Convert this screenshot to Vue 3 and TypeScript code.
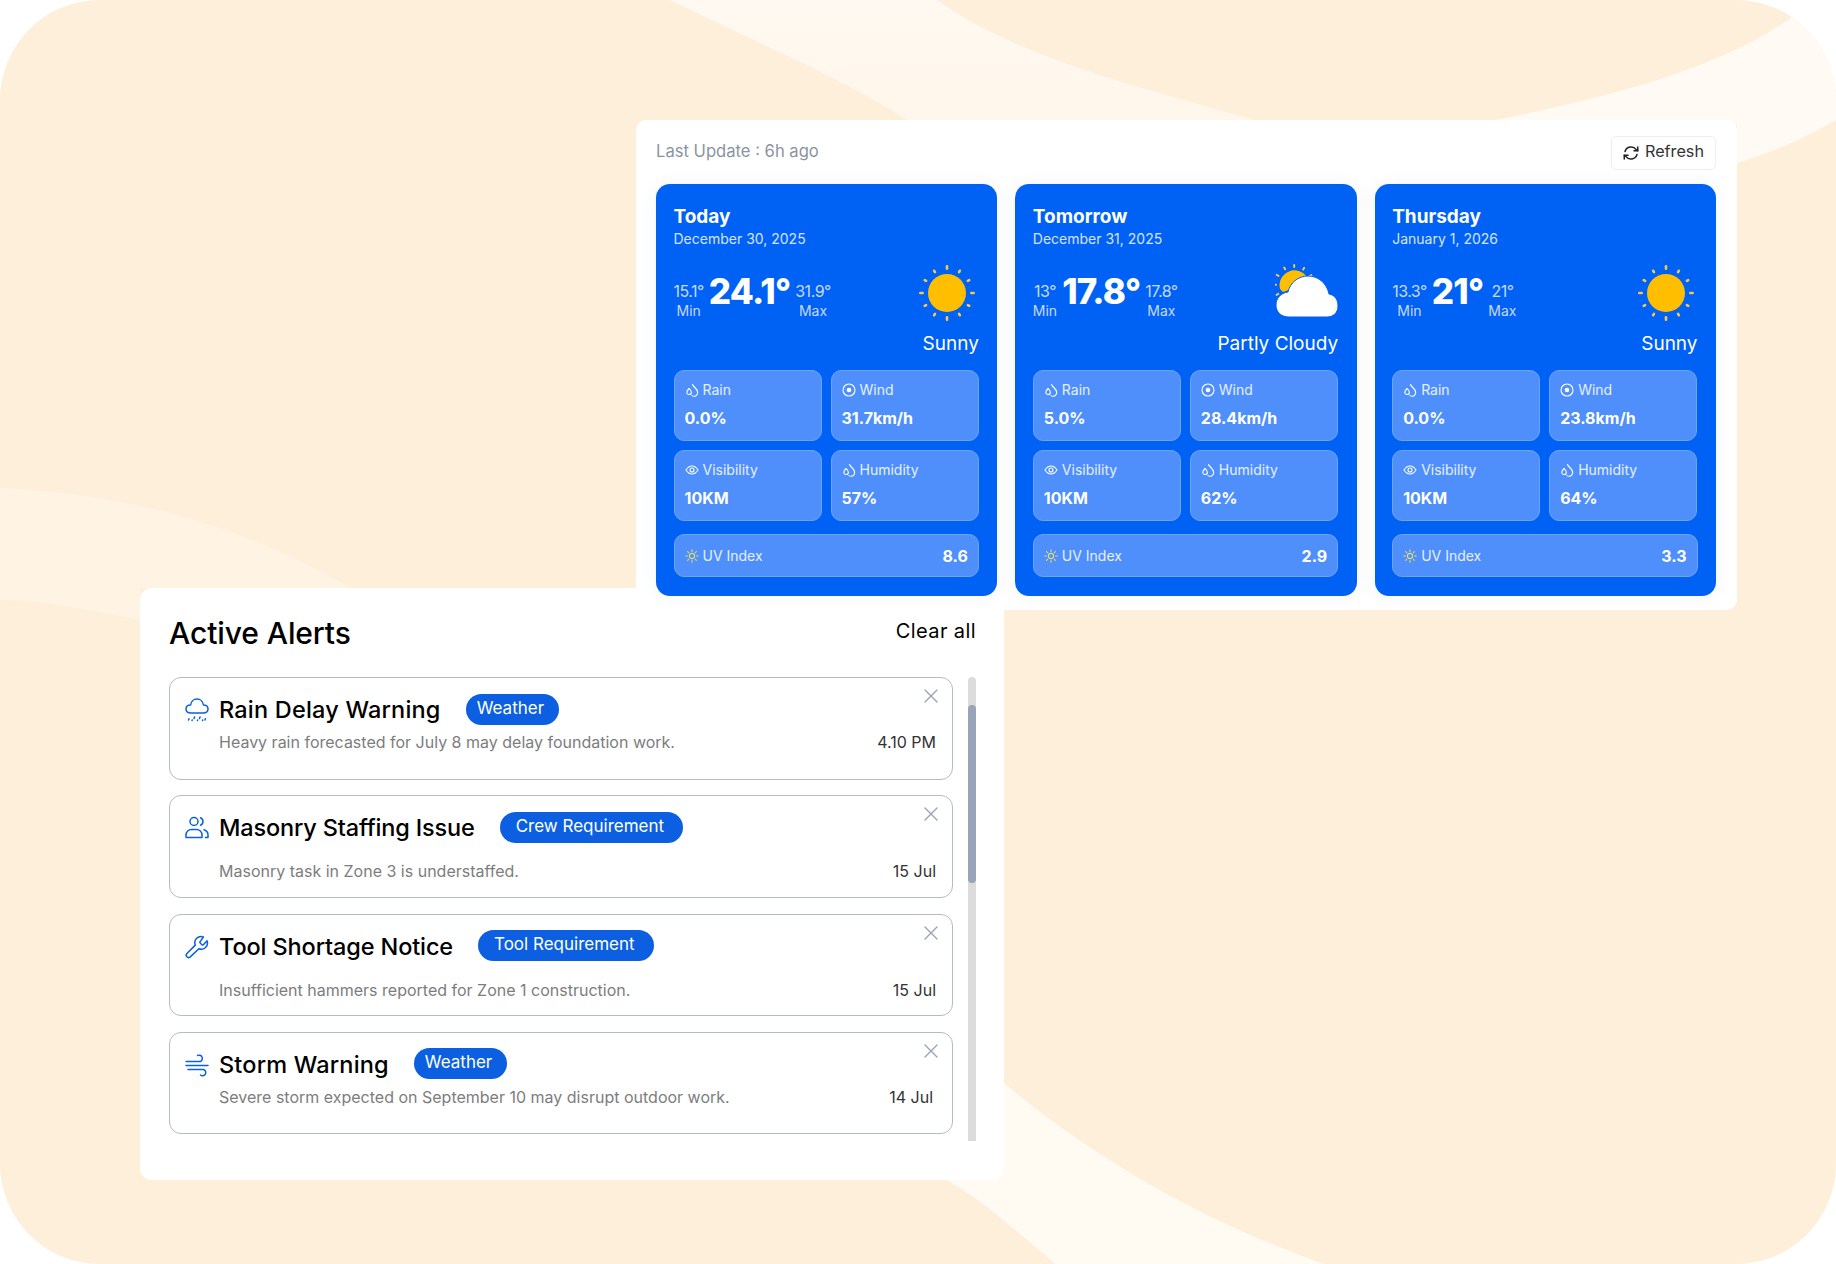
<script setup lang="ts">
interface Stat {
	label: string
	value: string
	icon: "drop" | "wind" | "eye"
}

interface Day {
	name: string
	date: string
	min: string
	temp: string
	max: string
	condition: string
	kind: "sun" | "cloud"
	stats: Stat[]
	uv: string
}

interface Alert {
	title: string
	tracking: number
	tag: string
	text: string
	time: string
	icon: "rain" | "users" | "tool" | "storm"
	tall: boolean
}

function makeStats(rain: string, wind: string, humidity: string): Stat[] {
	return [
		{ label: "Rain", value: rain, icon: "drop" },
		{ label: "Wind", value: wind, icon: "wind" },
		{ label: "Visibility", value: "10KM", icon: "eye" },
		{ label: "Humidity", value: humidity, icon: "drop" },
	]
}

const days: Day[] = [
	{ name: "Today", date: "December 30, 2025", min: "15.1°", temp: "24.1°", max: "31.9°", condition: "Sunny", kind: "sun", stats: makeStats("0.0%", "31.7km/h", "57%"), uv: "8.6" },
	{ name: "Tomorrow", date: "December 31, 2025", min: "13°", temp: "17.8°", max: "17.8°", condition: "Partly Cloudy", kind: "cloud", stats: makeStats("5.0%", "28.4km/h", "62%"), uv: "2.9" },
	{ name: "Thursday", date: "January 1, 2026", min: "13.3°", temp: "21°", max: "21°", condition: "Sunny", kind: "sun", stats: makeStats("0.0%", "23.8km/h", "64%"), uv: "3.3" },
]

const alerts: Alert[] = [
	{ title: "Rain Delay Warning", tracking: 0.2, tag: "Weather", text: "Heavy rain forecasted for July 8 may delay foundation work.", time: "4.10 PM", icon: "rain", tall: false },
	{ title: "Masonry Staffing Issue", tracking: -0.16, tag: "Crew Requirement", text: "Masonry task in Zone 3 is understaffed.", time: "15 Jul", icon: "users", tall: true },
	{ title: "Tool Shortage Notice", tracking: -0.12, tag: "Tool Requirement", text: "Insufficient hammers reported for Zone 1 construction.", time: "15 Jul", icon: "tool", tall: true },
	{ title: "Storm Warning", tracking: 0.18, tag: "Weather", text: "Severe storm expected on September 10 may disrupt outdoor work.", time: "14 Jul", icon: "storm", tall: false },
]

const rayAngles = [0, 30, 60, 90, 120, 150, 180, 210, 240, 270, 300, 330]
const smallRays = [-60, -30, 0, 30, 60, -90, -120]
</script>

<template>
	<div class="page">
		<svg class="backdrop" width="1836" height="1264" viewBox="0 0 1836 1264">
			<defs>
				<clipPath id="frame">
					<rect width="1836" height="1264" rx="100" />
				</clipPath>
				<linearGradient id="fade" x1="0" y1="0" x2="0" y2="1">
					<stop offset="0" stop-color="#fff9f1" />
					<stop offset="1" stop-color="#fff6ea" />
				</linearGradient>
			</defs>
			<g clip-path="url(#frame)">
				<rect width="1836" height="1264" fill="#feefdb" />
				<path d="M670 0 C750 40 850 80 922 130 L1290 130 C1150 90 1020 60 937 0 Z" fill="url(#fade)" />
				<path d="M1792 17 C1720 70 1600 100 1470 125 L1737 125 L1737 163 C1780 150 1810 135 1836 120 L1836 0 L1800 0 Z" fill="#fffaf3" />
				<path d="M0 488 C140 495 250 530 351 588 L140 588 L140 620 C90 610 40 600 0 600 Z" fill="#fff3e4" />
				<path d="M940 1170 L1004 1083 C1060 1130 1170 1210 1324 1264 L1055 1264 C1010 1225 975 1195 948 1181 Z" fill="#fffaf2" />
			</g>
		</svg>

		<section class="weather">
			<div class="weather-head">
				<span class="updated">Last Update : 6h ago</span>
				<button class="refresh" type="button">
					<svg width="18" height="18" viewBox="0 0 24 24" fill="none" stroke="#222" stroke-width="2" stroke-linecap="round" stroke-linejoin="round">
						<path d="M21 4v5h-5" />
						<path d="M3 20v-5h5" />
						<path d="M4 10a8.5 8.5 0 0 1 15-2.5L21 9" />
						<path d="M20 14a8.5 8.5 0 0 1-15 2.5L3 15" />
					</svg>
					<span>Refresh</span>
				</button>
			</div>

			<div class="days">
				<article v-for="day in days" :key="day.name" class="day">
					<h3>{{ day.name }}</h3>
					<p class="date">{{ day.date }}</p>

					<div class="now">
						<div class="temps">
							<div class="side">
								<span class="side-temp">{{ day.min }}</span>
								<span class="side-label">Min</span>
							</div>
							<span class="temp">{{ day.temp }}</span>
							<div class="side">
								<span class="side-temp">{{ day.max }}</span>
								<span class="side-label">Max</span>
							</div>
						</div>
						<svg v-if="day.kind === 'sun'" class="sky" width="58" height="58" viewBox="0 0 58 58">
							<circle cx="29" cy="29" r="19" fill="#ffbf00" />
							<rect v-for="a in rayAngles" :key="a" x="27.7" :y="a % 90 === 0 ? 1 : 2" width="2.6" :height="a % 90 === 0 ? 5 : 4.2" rx="1.3" fill="#f3c94a" :transform="`rotate(${a} 29 29)`" />
						</svg>
						<svg v-else class="cloud" width="64" height="56" viewBox="0 0 64 56">
							<rect v-for="a in smallRays" :key="a" x="18.2" y="1" width="2" height="4" rx="1" fill="#f3c94a" :transform="`rotate(${a} 19 22)`" />
							<path d="M5 26 A15 15 0 0 1 32 14 L28 22 L8 29 Z" fill="#ffbf00" />
							<path d="M14 54 C6 54 1 49 1 42 C1 35 6 30 13 29 C15 20 23 13 33 13 C44 13 52 21 54 31 C60 32 63 37 63 43 C63 50 58 54 52 54 Z" fill="#fff" stroke="#0061f5" stroke-width="1" />
						</svg>
					</div>

					<p class="condition">{{ day.condition }}</p>

					<div class="stats">
						<div v-for="stat in day.stats" :key="stat.label" class="stat">
							<div class="stat-label">
								<svg v-if="stat.icon === 'drop'" width="14" height="14" viewBox="0 0 14 14" fill="none" stroke="#fff" stroke-width="1.1" stroke-linecap="round" stroke-linejoin="round">
									<path d="M4 5.5 C2.6 7 1.8 8 1.8 9.2 A2.3 2.3 0 0 0 6.4 9.2 C6.4 8 5.4 7 4 5.5 Z" />
									<path d="M7.5 1.5 C8 3.5 12.6 6 12.6 9 A3.6 3.6 0 0 1 7 12.6" />
								</svg>
								<svg v-else-if="stat.icon === 'wind'" width="14" height="14" viewBox="0 0 14 14">
									<circle cx="7" cy="7" r="6" fill="none" stroke="#fff" stroke-width="1.1" />
									<circle cx="7" cy="7" r="2.3" fill="#fff" />
								</svg>
								<svg v-else width="14" height="14" viewBox="0 0 14 14" fill="none" stroke="#fff" stroke-width="1.1">
									<path d="M1 7 C3 3.8 5 3 7 3 C9 3 11 3.8 13 7 C11 10.2 9 11 7 11 C5 11 3 10.2 1 7 Z" />
									<circle cx="7" cy="7" r="2" />
								</svg>
								<span>{{ stat.label }}</span>
							</div>
							<strong>{{ stat.value }}</strong>
						</div>
					</div>

					<div class="uv">
						<div class="stat-label">
							<svg width="14" height="14" viewBox="0 0 14 14" fill="none" stroke="#e8dc6a" stroke-width="1.1" stroke-linecap="round">
								<circle cx="7" cy="7" r="2.6" />
								<path d="M7 .8v1.6M7 11.6v1.6M.8 7h1.6M11.6 7h1.6M2.6 2.6l1.1 1.1M10.3 10.3l1.1 1.1M2.6 11.4l1.1-1.1M10.3 3.7l1.1-1.1" />
							</svg>
							<span>UV Index</span>
						</div>
						<strong>{{ day.uv }}</strong>
					</div>
				</article>
			</div>
		</section>

		<section class="alerts">
			<div class="alerts-head">
				<h2>Active Alerts</h2>
				<button class="clear" type="button">Clear all</button>
			</div>

			<div class="alerts-body">
				<div class="alert-list">
					<article v-for="alert in alerts" :key="alert.title" class="alert" :class="{ tall: alert.tall }">
						<svg class="alert-icon" width="24" height="24" viewBox="0 0 24 24" fill="none" stroke="#0b5fe0" stroke-width="1.5" stroke-linecap="round" stroke-linejoin="round">
							<template v-if="alert.icon === 'rain'">
								<path d="M6 15 C3 15 1 13.4 1 11 C1 8.6 3 7 5.6 7 C6 3.5 8.6 1 12 1 C15.4 1 18 3.5 18.4 7 C21 7 23 8.6 23 11 C23 13.4 21 15 18 15 Z" />
								<path d="M3.5 22 L4 20.8 M9 20.5 L9.5 19 M14.5 20.5 L15 19 M20 22 L20.5 20.8 M7 22.6 L7.2 22 M12.5 22.6 L12.7 22 M17.5 22.6 L17.7 22" />
							</template>
							<template v-else-if="alert.icon === 'users'">
								<circle cx="9" cy="5.5" r="4" />
								<path d="M1 21.5 V19 C1 15.8 3.6 13.5 6.5 13.5 H11.5 C14.4 13.5 17 15.8 17 19 V21.5 H1 Z" />
								<path d="M15.5 1.8 A4 4 0 0 1 15.5 9.2" />
								<path d="M19 13.8 C21.5 14.6 23 16.6 23 19 V21.5 H20.5" />
							</template>
							<path v-else-if="alert.icon === 'tool'" d="M15.2 6.6 A1 1 0 0 0 15.2 8 L16.9 9.7 A1 1 0 0 0 18.3 9.7 L22.1 5.9 A6.2 6.2 0 0 1 13.9 13.7 L5 22.1 A2.4 2.4 0 0 1 1.7 18.7 L10.3 10.1 A6.2 6.2 0 0 1 18.4 2 Z" />
							<path v-else d="M1 8.5 H15.5 A3 3 0 1 0 12.5 2.5 M1 12.5 H23 M3 16.5 H18.5 A3.2 3.2 0 1 1 15.5 22" />
						</svg>

						<div class="alert-main">
							<div class="alert-title">
								<h4 :style="{ letterSpacing: `${alert.tracking}px` }">{{ alert.title }}</h4>
								<span class="tag" :class="{ long: alert.tag !== 'Weather' }">{{ alert.tag }}</span>
							</div>
							<div class="alert-foot">
								<p>{{ alert.text }}</p>
								<time>{{ alert.time }}</time>
							</div>
						</div>

						<svg class="close" width="16" height="16" viewBox="0 0 16 16" stroke="#9aa3b5" stroke-width="1.4" stroke-linecap="round">
							<path d="M2 2 L14 14 M14 2 L2 14" />
						</svg>
					</article>
				</div>

				<div class="scrollbar">
					<div class="thumb"></div>
				</div>
			</div>
		</section>
	</div>
</template>

<style>
html,
body {
	margin: 0;
	background: #fff;
}
</style>

<style scoped>
.page {
	position: relative;
	width: 1836px;
	height: 1264px;
	overflow: hidden;
	padding-top: 120px;
	box-sizing: border-box;
	font-family: Inter, "Liberation Sans", sans-serif;
	color: #000;
}

.backdrop {
	position: absolute;
	inset: 0;
}

h2,
h3,
h4,
p {
	margin: 0;
}

button {
	font-family: inherit;
	cursor: pointer;
}

.weather {
	position: relative;
	z-index: 2;
	box-sizing: border-box;
	width: 1101px;
	height: 490px;
	margin-left: 636px;
	padding: 16px 21px 14px 20px;
	background: #fff;
	border-radius: 10px 10px 10px 0;
}

.weather-head {
	display: flex;
	justify-content: space-between;
	align-items: flex-start;
	height: 34px;
	margin-bottom: 14px;
}

.updated {
	margin-top: 5px;
	font-size: 16.6px;
	line-height: 20px;
	color: #8b93a1;
}

.refresh {
	display: flex;
	align-items: center;
	gap: 5px;
	height: 34px;
	padding: 0 11px 0 10px;
	font-size: 16.2px;
	color: #333;
	background: #fff;
	border: 1px solid #eceef1;
	border-radius: 5px;
}

.refresh span {
	margin-bottom: 4px;
}

.days {
	display: grid;
	grid-template-columns: repeat(3, 1fr);
	gap: 18px;
}

.day {
	box-sizing: border-box;
	height: 412px;
	padding: 21px 18.5px 0 17.5px;
	color: #fff;
	background: #0061f5;
	border-radius: 14px;
	box-shadow: 0 0 18px rgba(40, 60, 100, 0.06);
}

.day h3 {
	font-size: 19px;
	font-weight: 700;
	line-height: 24px;
}

.date {
	font-size: 14px;
	line-height: 20px;
	color: #d5e4ff;
}

.now {
	display: flex;
	justify-content: space-between;
	align-items: center;
	height: 58px;
	margin-top: 15px;
}

.temps {
	display: flex;
	align-items: flex-start;
	gap: 5px;
	margin-top: 7px;
}

.side {
	display: flex;
	flex-direction: column;
	align-items: center;
	margin-top: 9px;
	color: #c6dafd;
}

.side-temp {
	font-size: 16px;
	line-height: 20px;
	letter-spacing: -0.5px;
}

.side-label {
	font-size: 14px;
	line-height: 20px;
}

.temp {
	margin-top: -1px;
	font-size: 35px;
	font-weight: 800;
	line-height: 40px;
	letter-spacing: -0.8px;
	color: #fff;
}

.sky {
	margin-right: 3px;
}

.cloud {
	margin-top: -4px;
	margin-right: -1px;
}

.condition {
	margin-top: 9px;
	font-size: 19px;
	line-height: 26px;
	text-align: right;
}

.stats {
	display: grid;
	grid-template-columns: repeat(2, 148px);
	gap: 9px 9px;
	margin-top: 13px;
}

.stat {
	box-sizing: border-box;
	height: 71px;
	padding: 9px 10px 0;
	background: #4f8ffb;
	border: 1px solid #6ea3fb;
	border-radius: 10px;
}

.stat-label {
	display: flex;
	align-items: center;
	gap: 4px;
	font-size: 14px;
	line-height: 20px;
	color: #e6efff;
}

.stat strong {
	display: block;
	margin-top: 8px;
	font-size: 16px;
	font-weight: 700;
	line-height: 20px;
}

.uv {
	display: flex;
	justify-content: space-between;
	align-items: center;
	box-sizing: border-box;
	height: 43px;
	margin-top: 13px;
	padding: 0 10px;
	background: #4f8ffb;
	border: 1px solid #6ea3fb;
	border-radius: 10px;
}

.uv strong {
	font-size: 16px;
	font-weight: 700;
}

.alerts {
	position: relative;
	box-sizing: border-box;
	width: 864px;
	height: 592px;
	margin: -22px 0 0 140px;
	padding: 25px 28px 0 29px;
	background: #fff;
	border-radius: 12px;
}

.alerts-head {
	display: flex;
	justify-content: space-between;
	align-items: flex-start;
	height: 64px;
}

h2 {
	font-size: 30px;
	font-weight: 500;
	line-height: 40px;
	letter-spacing: -0.1px;
}

.clear {
	padding: 0;
	margin-top: 5px;
	font-size: 20px;
	line-height: 26px;
	letter-spacing: 0.4px;
	color: #000;
	background: none;
	border: none;
}

.alerts-body {
	display: flex;
	gap: 15px;
}

.alert-list {
	display: flex;
	flex-direction: column;
	gap: 15.8px;
	width: 784px;
}

.alert {
	position: relative;
	display: flex;
	gap: 10px;
	box-sizing: border-box;
	height: 102.5px;
	padding: 16px 16px 0 15px;
	background: #fff;
	border: 1px solid #b4bac6;
	border-radius: 12px;
}

.alert-icon {
	flex: none;
	margin-top: 4px;
}

.alert-main {
	flex: 1;
	min-width: 0;
}

.alert-title {
	display: flex;
	align-items: center;
	gap: 25px;
	height: 30px;
	margin-top: 1px;
}

.alert-title h4 {
	font-size: 23.5px;
	font-weight: 500;
	line-height: 30px;
}

.tag {
	margin-top: -2px;
	padding: 0 15px 2px 11px;
	font-size: 17px;
	line-height: 29px;
	color: #fff;
	background: #0b5fe0;
	border-radius: 16px;
}

.tag.long {
	padding: 0 19px 2px 16px;
}

.alert-foot {
	display: flex;
	justify-content: space-between;
	align-items: center;
	margin-top: 6px;
}

.tall .alert-foot {
	margin-top: 17px;
}

.alert-foot p {
	font-size: 16px;
	line-height: 22px;
	color: #7d7d7d;
}

.alert-foot time {
	font-size: 16px;
	line-height: 22px;
	color: #333;
}

.alert:last-child time {
	margin-right: 3px;
}

.close {
	position: absolute;
	top: 10px;
	right: 13px;
}

.scrollbar {
	position: relative;
	width: 8px;
	height: 464px;
	background: #dcdcdc;
	border-radius: 4px 4px 0 0;
}

.thumb {
	position: absolute;
	top: 28px;
	left: 0;
	width: 8px;
	height: 178px;
	background: #98a4b8;
	border-radius: 4px;
}
</style>
